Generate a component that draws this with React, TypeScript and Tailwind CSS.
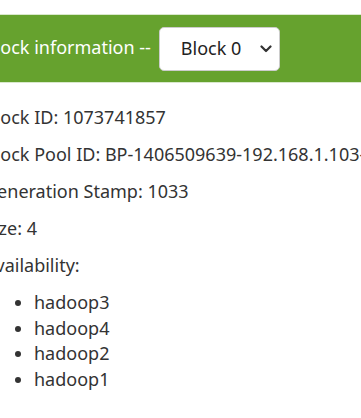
import React from 'react';

const replicas = ['hadoop3', 'hadoop4', 'hadoop2', 'hadoop1'];

export default function App() {
    return (
        <div className="w-[361px] h-[418px] overflow-hidden bg-white text-[#333] font-['Noto_Sans',sans-serif]">
            {/* modal header, scrolled a little to the right so the left edge is cut */}
            <div className="mt-[14px] h-[69px] bg-[#66a22e] border-y border-[#d9e8cc] flex items-center -ml-4 whitespace-nowrap">
                <span className="text-white text-[18px] mr-2 mb-[3px]">Block information --</span>
                <div className="w-[121px] h-[44px] bg-white border border-[#ccc] rounded-[5px] flex items-center pl-[21px] pr-[7px] text-[#222] text-[18px]">
                    <span className="flex-1">Block 0</span>
                    <svg width="12" height="8" viewBox="0 0 12 8" fill="none" stroke="#333" strokeWidth="2.2" strokeLinecap="round" strokeLinejoin="round">
                        <path d="M1.5 1.5 6 6l4.5-4.5" />
                    </svg>
                </div>
            </div>

            <div className="mt-[22px] text-[18px] leading-[25.7px] flex flex-col gap-[11.3px]">
                <div className="-ml-4 whitespace-nowrap flex flex-col gap-[11.3px]">
                    <p>Block ID: 1073741857</p>
                    <p>Block Pool ID: BP-1406509639-192.168.1.103-1616479237567</p>
                    <p>Generation Stamp: 1033</p>
                    <p>Size: 4</p>
                    <p>Availability:</p>
                </div>
                <ul className="list-disc pl-[34px]">
                    {replicas.map((h) => (
                        <li key={h}>{h}</li>
                    ))}
                </ul>
            </div>
        </div>
    );
}
